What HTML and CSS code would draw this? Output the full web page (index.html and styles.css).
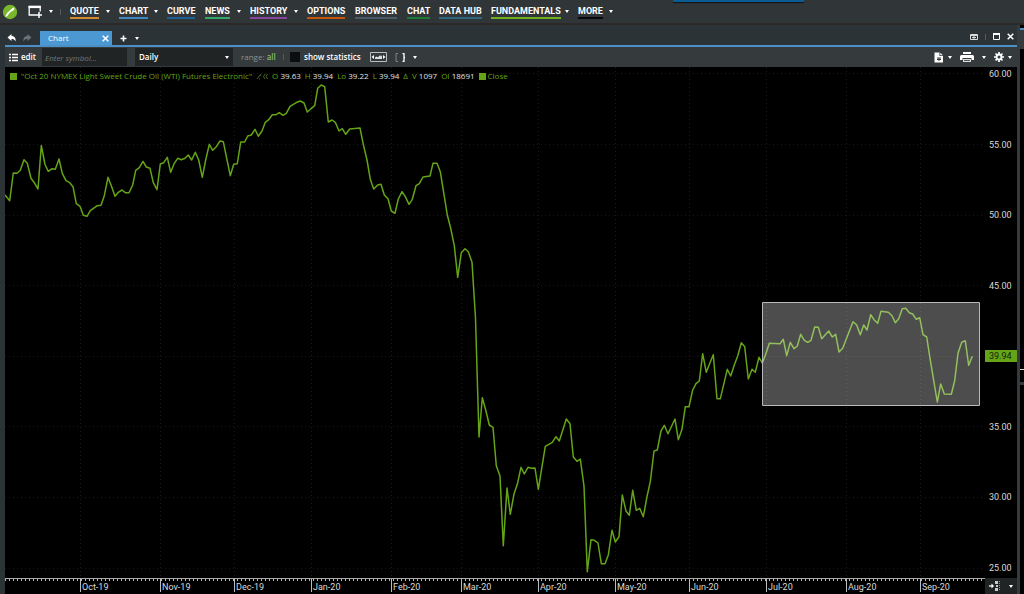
FILE: index.html
```html
<!DOCTYPE html>
<html lang="en">
<head>
<meta charset="utf-8">
<title>Chart</title>
<link rel="stylesheet" href="styles.css">
</head>
<body>
<div class="app">
  <header class="topbar">
    <svg class="logo" viewBox="0 0 16 16" aria-hidden="true"><circle cx="8" cy="8" r="7.200" fill="#78b62a"/><path d="M3 12.500L5.500 8.500 10.500 4l2-.5L12 6 8 8.500l-3 4z" fill="#fff"/></svg>
    <button class="icon-btn new-window" aria-label="New window">
      <svg width="15" height="13" viewBox="0 0 15 13"><path d="M8 10H1.200V1.500h11v5" fill="none" stroke="#fff" stroke-width="1.300"/><path d="M.6 2h12.200" stroke="#fff" stroke-width="2.200"/><path d="M11 7v6M8 10h6" stroke="#fff" stroke-width="1.500"/></svg>
      <i class="caret"></i>
    </button>
    <i class="divider"></i>
    <nav class="menu">
      <div class="item"><a class="orange" href="#">QUOTE</a><i class="caret"></i></div>
      <div class="item"><a class="sky" href="#">CHART</a><i class="caret"></i></div>
      <div class="item"><a class="blue" href="#">CURVE</a></div>
      <div class="item"><a class="mint" href="#">NEWS</a><i class="caret"></i></div>
      <div class="item"><a class="purple" href="#">HISTORY</a><i class="caret"></i></div>
      <div class="item"><a class="rust" href="#">OPTIONS</a></div>
      <div class="item"><a class="slate" href="#">BROWSER</a></div>
      <div class="item"><a class="green" href="#">CHAT</a></div>
      <div class="item"><a class="teal" href="#">DATA HUB</a></div>
      <div class="item"><a class="lime" href="#">FUNDAMENTALS</a><i class="caret"></i></div>
      <div class="item"><a class="black" href="#">MORE</a><i class="caret"></i></div>
    </nav>
    <div class="drop-handle"></div>
  </header>
  <div class="workspace">
    <main class="panel">
      <div class="tabs">
        <button class="icon-btn" aria-label="Undo"><svg width="10" height="8" viewBox="0 0 10 8"><path d="M4.500 0v2C8 2 9 4.500 8.500 7.500 7.500 5.500 6.500 5 4.500 5v2L.5 3.500z" fill="#fff"/></svg></button>
        <button class="icon-btn" aria-label="Redo"><svg width="10" height="8" viewBox="0 0 10 8"><path d="M5.500 0v2C2 2 1 4.500 1.500 7.500 2.500 5.500 3.500 5 5.500 5v2l4-3.500z" fill="#697176"/></svg></button>
        <div class="tab"><span>Chart</span><button class="icon-btn" aria-label="Close tab"><svg width="7" height="7" viewBox="0 0 7 7"><path d="M.7.7l5.600 5.600M6.300.7L.7 6.300" stroke="#fff" stroke-width="1.500"/></svg></button></div>
        <button class="icon-btn add" aria-label="Add tab"><svg width="7" height="7" viewBox="0 0 7 7"><path d="M3.500.5v6M.5 3.500h6" stroke="#fff" stroke-width="1.600"/></svg><i class="caret"></i></button>
        <div class="window-tools">
          <button class="icon-btn" aria-label="Dock"><svg width="8" height="6" viewBox="0 0 8 6"><path d="M.5.5h7v5h-7zM.5 1.500h7M2 3.500h4M4 2v3" fill="none" stroke="#d8dadb"/></svg></button>
          <i class="divider"></i>
          <button class="icon-btn" aria-label="Maximize"><svg width="7" height="7" viewBox="0 0 7 7"><path d="M.5 1h6v5.500h-6z" fill="none" stroke="#fff"/><path d="M0 1h7" stroke="#fff" stroke-width="2"/></svg></button>
          <button class="icon-btn" aria-label="Close"><svg width="7" height="7" viewBox="0 0 7 7"><path d="M.7.7l5.600 5.600M6.300.7L.7 6.300" stroke="#fff" stroke-width="1.500"/></svg></button>
        </div>
      </div>
      <div class="toolbar">
        <button class="icon-btn edit"><svg width="9" height="9" viewBox="0 0 9 9"><path d="M0 1.500h2M3 1.500h6M0 4.500h2M3 4.500h6M0 7.500h2M3 7.500h6" stroke="#fff" stroke-width="1.300"/></svg>edit</button>
        <input class="symbol" type="text" placeholder="Enter symbol..." aria-label="Symbol">
        <div class="interval"><select aria-label="Interval"><option>Daily</option></select><i class="caret"></i></div>
        <div class="range">range: <b>all</b></div>
        <i class="divider"></i>
        <label class="stats"><input type="checkbox">show statistics</label>
        <button class="icon-btn" aria-label="Fit chart"><svg width="17" height="10" viewBox="0 0 17 10"><path d="M.5.5h16v9H.5z" fill="none" stroke="#b9bdbe"/><path d="M1.500 5l2.500-2v4zM15.500 5L13 3v4z" fill="#fff"/><path d="M5 7V5.500l1.500-1L8 5.200l2-2 1 1 1-1V7z" fill="#ddd"/></svg></button>
        <button class="icon-btn brackets" aria-label="Brackets"><svg width="11" height="9" viewBox="0 0 11 9"><path d="M3 .5H1v8h2" fill="none" stroke="#7d8385"/><path d="M7.500.5H9v8H7.500M9 4.500h1" fill="none" stroke="#fff" stroke-width="1.300"/></svg><i class="caret"></i></button>
        <div class="actions">
          <button class="icon-btn" aria-label="Export"><svg width="10" height="11" viewBox="0 0 10 11"><path d="M.5.5h5v3.500h3.500v6.500H.5z" fill="#fff"/><path d="M6.300.7v2.500h2.500z" fill="#fff"/><path d="M3 6h4M5 6v3M3 7.500h4" stroke="#353a3d"/></svg><i class="caret"></i></button>
          <button class="icon-btn" aria-label="Print"><svg width="14" height="11" viewBox="0 0 14 11"><path d="M3 0h8v2H3zM1.500 3h11Q14 3 14 4.500V8h-2.500V6h-9v2H0V4.500Q0 3 1.500 3z" fill="#fff"/><path d="M3 7h8v3H3z" fill="#ddd"/><path d="M4 8.500h6" stroke="#51575a"/></svg><i class="caret print-caret"></i></button>
          <button class="icon-btn" aria-label="Settings"><svg width="10" height="10" viewBox="0 0 10 10"><path d="M5 0v10M0 5h10M1.500 1.500l7 7M8.500 1.500l-7 7" stroke="#fff" stroke-width="1.700"/><circle cx="5" cy="5" r="3.400" fill="#fff"/><circle cx="5" cy="5" r="1.500" fill="#353a3d"/></svg><i class="caret"></i></button>
        </div>
      </div>
      <div class="chart">
        <svg class="plot" viewBox="5 67 980 511" preserveAspectRatio="none" role="img" aria-label="Crude oil closing price">
          <g class="grid">
            <path d="M5 73.500h980M5 144.500h980M5 215.500h980M5 285.500h980M5 356.500h980M5 426.500h980M5 497.500h980M5 568.500h980"/>
            <path d="M80.500 67v511M160.500 67v511M234.500 67v511M311.500 67v511M391.500 67v511M461.500 67v511M538.500 67v511M615.500 67v511M689.500 67v511M766.500 67v511M846.500 67v511M920.500 67v511"/>
          </g>
          <polyline class="series" points="5,195 9.700,200.700 13.300,173 17,173.300 20.300,170.300 24,159.700 27.300,163.300 31,178.300 34.700,183.300 38,189 41.300,145.500 45,164.500 48.300,171.300 52,168.700 55.300,169.300 59,159 62.300,173.300 66,180.700 69.300,182.300 73,186.700 76.300,203.700 80,206.300 83.300,215.300 87,216.300 90.300,210.700 97.300,205.700 101,205.300 104.300,195.700 108,177.300 111.300,185.700 115,196.300 118.300,192.300 122,190 125.300,192.700 129,192.700 132.700,185 135.700,170.300 139.300,167.700 143,161.300 146.300,167 150,168.300 153.300,182.700 157,189.700 160.300,164 163.700,162.700 167.300,157.300 170.700,172.300 174.300,163.300 177.700,158.300 181.300,159.700 185,158.300 188.300,155 191.700,160 195.300,152.300 198.700,160 202.300,177.300 205.700,160 209.300,144.300 212.700,150.300 216.300,146.700 220,141 223.300,141.700 226.700,158.300 230.300,175.700 233.700,164.300 237.300,163.700 240.700,142 244.700,142 247.700,136 251.300,135 255,129.300 258.300,136.300 262,131 265.300,122.300 269,119.300 272.300,114.700 276,114.700 279.300,112.700 283,115.300 286.300,113.300 290,106.300 296.700,102.300 300.300,101 304,103 307.300,112 311,108.700 314.700,105.700 317.700,88.300 321.300,85 324.700,86.700 328.300,122 332,120 335.300,122.300 339,131 342.300,128.700 345.700,134.300 349.700,129 360,128 363.300,144.300 367,160 370.300,179.300 373.700,189 377.700,185 381,184.300 384.300,195 388,198.700 391.300,211 395,213.300 398.300,199 402,191.700 405.300,196.700 409,204.300 412.300,199.300 416,185.700 419.300,183.700 423,177 430,176 433,163.300 437,163.300 440.300,171.700 443.700,192.700 447.300,215 450.700,228.300 454.300,245.700 457.700,277.300 461.300,252.700 465,248.700 468.300,251.700 472,262.300 475.500,318 479,437 482.300,397.700 485.700,410 489.300,425 493,427.300 496.300,465.700 500,476 503.300,545.700 507,488 510.300,514.300 514,494 517.300,484.300 521,467.300 524.300,474 528,467.300 531.300,468.300 535,468 538.300,489.300 542,466.700 545.300,446.300 552.300,442.300 556,436.700 559.300,441 566.300,419 570,423.700 573.300,457 577,461.300 580.300,459 584,486 587.300,571.700 591,539.700 594.300,540.300 598,543 601.300,563.700 605,563.700 608.300,555 612,530.300 615.300,542 619,536.700 622.300,495 626,511 629.300,515.300 632.700,490.300 636.300,510.300 639.700,508.300 643.300,516.700 647,496.700 650.300,481.700 654,451 657.300,450 661,431 664.300,425.300 668,433.700 675,419 678.300,439.700 682,429.300 685.300,406.700 689,406.700 692.700,390 696,383.700 699.300,381 702.700,353.700 706.300,372.300 710,362.700 713.300,354.700 717,398.700 720.300,398.700 727.300,369.300 730.700,376 734.300,365 737.700,356 741.300,342.700 744.700,346.700 748.300,379 752,369.300 755.300,372.300 759,357.300 762.300,363 765.700,354.300 769.300,343.300 780,343.700 783.300,339.300 786.700,355.700 790.300,342.300 794,348.700 797.300,346 800.700,334.300 804.300,340.300 807.700,342.300 811,340.300 814.700,327 818.300,327.300 821.700,338.700 828.700,331 832.300,337 835.700,334.300 839,352 842.700,348.300 853,321.700 856.700,325 860.300,334.700 863.700,325 867,330 870.700,314.700 874,319.700 877.700,323.300 881,311.300 888.300,312.300 892,315.700 895.300,322.700 898.700,318.700 902.300,308.700 905.700,308.300 909.300,312.700 912.700,314 916.300,319.300 919.700,317.700 923,334.700 926.700,337 930,358.300 937.300,402 940.700,384 944.300,394 951.300,394.300 954.700,380.700 958,353.300 961.700,342.300 965.300,340.700 968.700,365.300 972.300,356.300"/>
          <rect class="selection" x="762.500" y="302.500" width="217" height="103"/>
        </svg>
        <div class="legend">
          <i class="swatch"></i><span class="title">"Oct 20 NYMEX Light Sweet Crude Oil (WTI) Futures Electronic"</span>
          <svg width="12" height="7" viewBox="0 0 12 7" aria-hidden="true"><path d="M1 6l3-4M3 6h1M5 1L4 3M9 1L7.500 3.500 9 6M11.500 1L10 3.500l1.500 2.500" fill="none" stroke="#47661f"/></svg>
          <span>O <b>39.63</b></span><span>H <b>39.94</b></span><span>Lo <b>39.22</b></span><span>L <b>39.94</b></span><span>Δ</span><span>V <b>1097</b></span><span>OI <b>18691</b></span>
          <span class="close-key"><i class="swatch"></i>Close</span>
        </div>
        <div class="prices">
          <span>60.00</span><span>55.00</span><span>50.00</span><span>45.00</span><span class="last">39.94</span><span>35.00</span><span>30.00</span><span>25.00</span>
        </div>
        <div class="dates">
          <span></span><span>Oct-19</span><span>Nov-19</span><span>Dec-19</span><span>Jan-20</span><span>Feb-20</span><span>Mar-20</span><span>Apr-20</span><span>May-20</span><span>Jun-20</span><span>Jul-20</span><span>Aug-20</span><span>Sep-20</span>
        </div>
        <button class="icon-btn corner" aria-label="Scroll to latest"><svg width="12" height="10" viewBox="0 0 12 10"><path d="M0 5h4" stroke="#fff" stroke-width="1.300"/><path d="M2.500 2.500L5 5 2.500 7.500z" fill="#fff"/><path d="M6 0h3v3H6zM6 7h3v3H6zM7 4h2v2H7z" fill="#ccc"/><path d="M10.500 0v10" stroke="#999" stroke-dasharray="1 1"/></svg><i class="caret"></i></button>
      </div>
    </main>
    <aside class="neighbour"><div class="sliver-bar"></div><div class="sliver-upper"></div><div class="sliver-lower"></div></aside>
  </div>
</div>
</body>
</html>
```
FILE: styles.css
```css
* { box-sizing: border-box; }
body { margin: 0; background: #303538; color: #fff; font: 8px/12px "Open Sans", "Noto Sans", sans-serif; }
.app { height: 100vh; display: grid; grid-template-rows: 25px 1fr; }
.icon-btn { display: flex; align-items: center; gap: 4px; padding: 0; border: 0; background: none; color: inherit; font: inherit; }
.caret { flex: none; width: 0; height: 0; border: 2px solid transparent; border-top: 3px solid #fff; border-bottom: 0; }
.divider { width: 1px; height: 6px; background: #555c60; }

.topbar { position: relative; display: flex; align-items: center; padding: 0 3px 0 2px; border-bottom: 2px solid #2b2928; }
.logo { width: 16px; height: 16px; margin-right: 10px; }
.new-window { width: 32px; gap: 6px; }
.menu { display: grid; grid-template-columns: 49px 48px 38px 45px 57px 48px 52px 32px 52px 87px 44px; margin-left: 9px; font: 9px/12px Roboto, sans-serif; }
.item { display: flex; align-items: center; justify-content: space-between; padding-right: 9px; }
.item a { border-bottom: 2px solid; color: #fff; font-weight: 700; text-decoration: none; line-height: 12px; white-space: nowrap; }
.item .orange { border-color: #d28a32; }
.item .sky { border-color: #3f87be; }
.item .blue { border-color: #1b5f96; }
.item .mint { border-color: #31a86a; }
.item .purple { border-color: #8646a0; }
.item .rust { border-color: #c4560c; }
.item .slate { border-color: #48596a; }
.item .green { border-color: #187c35; }
.item .teal { border-color: #2e6680; }
.item .lime { border-color: #6eae1b; }
.item .black { border-color: #08090a; }
.drop-handle { position: absolute; top: 0; left: 65.700%; width: 131px; height: 2px; background: #0b5c94; box-shadow: 0 1px 1px #101315; }

.workspace { display: grid; grid-template-columns: 1fr 7px; min-height: 0; }
.panel { display: grid; grid-template-rows: 22px 20px 1fr; min-width: 0; min-height: 0; padding-left: 5px; background: #2b3336; }
.tabs { display: flex; align-items: flex-end; gap: 5px; padding-left: 2px; border-bottom: 2px solid #4a8fc6; }
.tabs > .icon-btn { height: 14px; }
.tab { display: flex; align-items: center; justify-content: space-between; width: 72px; height: 14px; margin-left: 3px; padding: 0 3px 0 8px; background: #4b98d3; }
.tabs .add { margin-left: 3px; gap: 8px; }
.window-tools { display: flex; align-items: center; gap: 7px; height: 17px; margin-left: auto; padding-right: 3px; }

.toolbar { display: flex; align-items: center; background: #353a3d; }
.edit { width: 37px; padding-left: 4px; gap: 3px; font-weight: 600; }
.symbol { width: 85px; height: 18px; padding: 0 3px; border: 0; background: #202425; color: #fff; font: inherit; }
.symbol::placeholder { color: #74797b; font-style: italic; opacity: 1; }
.interval { display: flex; align-items: center; width: 98px; height: 18px; margin-left: 8px; padding-right: 4px; background: #202425; }
.interval select { flex: 1; min-width: 0; padding: 0 4px; border: 0; background: none; color: #fff; font: inherit; font-weight: 600; appearance: none; }
.range { width: 42px; margin-left: 8px; color: #8c9193; }
.range b { color: #83ba6b; font-weight: 600; }
.stats { display: flex; align-items: center; gap: 4px; width: 75px; margin: 0 5px 0 6px; font-weight: 600; white-space: nowrap; }
.stats input { flex: none; width: 10px; height: 10px; margin: 0; appearance: none; background: #0b0d0e; }
.brackets { margin-left: 8px; gap: 7px; }
.actions { display: flex; align-items: center; gap: 8px; margin-left: auto; padding-right: 5px; }
.print-caret { margin-left: 4px; }

.chart { position: relative; display: grid; grid-template: minmax(0, 1fr) 16px / minmax(0, 1fr) 32px; background: #000; }
.plot { width: 100%; height: 100%; min-height: 0; }
.grid path { fill: none; stroke: #191919; stroke-dasharray: 1 3; vector-effect: non-scaling-stroke; }
.series { fill: none; stroke: #65a416; stroke-width: 1.500; stroke-linejoin: round; vector-effect: non-scaling-stroke; }
.selection { fill: #fff; fill-opacity: .3; stroke: #b9b9b9; vector-effect: non-scaling-stroke; }
.legend { position: absolute; top: 3px; left: 5px; display: flex; align-items: center; gap: 4px; color: #65a416; white-space: nowrap; }
.legend b { color: #e2e2e2; font-weight: 400; }
.swatch { display: inline-block; width: 7px; height: 7px; background: #65a416; }
.close-key { display: flex; align-items: center; gap: 2px; }
.prices, .dates { color: #d8d8d8; font-family: Roboto, sans-serif; font-size: 9px; }
.prices { display: flex; flex-direction: column; justify-content: space-between; padding: 1px 0 4px; }
.prices span { padding-left: 4px; line-height: 12px; }
.prices .last { background: #65a416; color: #10220a; }
.dates { display: grid; grid-template-columns: 75fr 80fr 74fr 77fr 80fr 70fr 77fr 77fr 74fr 77fr 80fr 74fr 65fr; border-top: 1px solid #aaa; background: repeating-linear-gradient(90deg, #bbb 0 1px, transparent 1px 4px) 0 0 / 100% 2px no-repeat; line-height: 17px; }
.dates span + span { padding-left: 1px; border-left: 1px solid #bbb; height: 13px; }
.corner { justify-content: center; gap: 8px; background: #202425; }
.neighbour { display: grid; grid-template-rows: 24px 321fr 224fr; border-left: 3px solid #343a3e; background: #000; }
.sliver-bar { margin-top: 3px; border-top: 2px solid #4a8fc6; background: #353a3d; }
.sliver-upper { border-bottom: 1px solid #ddd; }
.sliver-lower { margin-top: 12px; border-top: 3px solid #343a3e; }
```
